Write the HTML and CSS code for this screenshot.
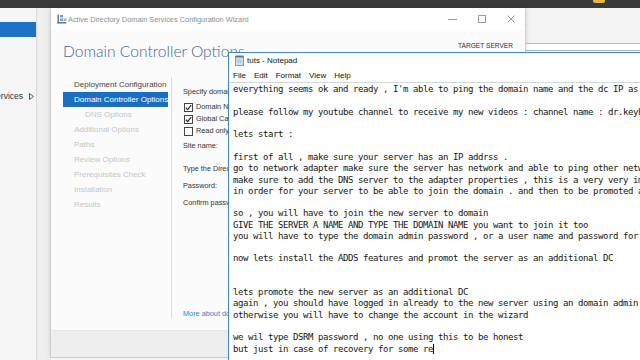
FILE: index.html
```html
<!DOCTYPE html>
<html lang="en">
<head>
<meta charset="utf-8">
<title>Domain Controller Options</title>
<link rel="stylesheet" href="styles.css">
</head>
<body>
<div class="screen">
  <div class="taskbar"><span class="tray-icon"></span></div>
  <div class="desktop">
    <aside class="sm-nav">
      <div class="sm-selected"></div>
      <div class="sm-row">
        <span class="sm-label"><span>File and Storage Services</span></span>
        <svg class="sm-arrow" width="5" height="7" viewBox="0 0 5 7"><polygon points="0.5,0.5 4.5,3.5 0.5,6.5" fill="none" stroke="#555" stroke-width="1"/></svg>
      </div>
    </aside>
    <main class="sm-main">
      <div class="sm-head"></div>
      <div class="sm-sub"></div>
      <div class="sm-content"></div>
    </main>

    <section class="wizard">
      <div class="wz-titlebar">
        <svg class="wz-icon" width="10" height="10" viewBox="0 0 10 10">
          <rect x="0.5" y="0.5" width="1.5" height="9" fill="#5d7a99"/>
          <rect x="0.5" y="8" width="9" height="1.5" fill="#5d7a99"/>
          <rect x="3" y="1" width="3" height="2.5" fill="#7f9fc0"/>
          <rect x="3" y="4.5" width="3" height="2.5" fill="#7f9fc0"/>
          <rect x="6.5" y="4.5" width="3" height="2.5" fill="#9bb5cf"/>
        </svg>
        <span class="wz-title">Active Directory Domain Services Configuration Wizard</span>
        <div class="wz-controls">
          <span class="wz-btn"><svg width="10" height="10" viewBox="0 0 10 10"><line x1="0" y1="5.5" x2="9" y2="5.5" stroke="#9a9a9a" stroke-width="1"/></svg></span>
          <span class="wz-btn"><svg width="10" height="10" viewBox="0 0 10 10"><rect x="1.5" y="1.5" width="7" height="7" fill="none" stroke="#9a9a9a" stroke-width="1"/></svg></span>
          <span class="wz-btn"><svg width="10" height="10" viewBox="0 0 10 10"><path d="M1.5 1.5 L8.5 8.5 M8.5 1.5 L1.5 8.5" stroke="#9a9a9a" stroke-width="1"/></svg></span>
        </div>
      </div>
      <div class="wz-header">
        <h1 class="wz-heading">Domain Controller Options</h1>
        <div class="wz-target">TARGET SERVER</div>
      </div>
      <div class="wz-body">
        <nav class="wz-steps">
          <div class="step done">Deployment Configuration</div>
          <div class="step active">Domain Controller Options</div>
          <div class="step sub">DNS Options</div>
          <div class="step">Additional Options</div>
          <div class="step">Paths</div>
          <div class="step">Review Options</div>
          <div class="step">Prerequisites Check</div>
          <div class="step">Installation</div>
          <div class="step">Results</div>
        </nav>
        <div class="wz-content">
          <div class="c-intro">Specify domain controller capabilities and site information</div>
          <div class="checks">
            <div class="check-row"><span class="cb"><svg width="7" height="7" viewBox="0 0 7 7"><polyline points="0.8,3.6 2.7,5.6 6.2,1.2" fill="none" stroke="#222" stroke-width="1.2"/></svg></span>Domain Name System (DNS) server</div>
            <div class="check-row"><span class="cb"><svg width="7" height="7" viewBox="0 0 7 7"><polyline points="0.8,3.6 2.7,5.6 6.2,1.2" fill="none" stroke="#222" stroke-width="1.2"/></svg></span>Global Catalog (GC)</div>
            <div class="check-row"><span class="cb"></span>Read only domain controller (RODC)</div>
          </div>
          <div class="c-site">Site name:</div>
          <div class="c-dsrm">Type the Directory Services Restore Mode (DSRM) password</div>
          <div class="c-pass">Password:</div>
          <div class="c-confirm">Confirm password:</div>
          <div class="c-more">More about domain controller options</div>
        </div>
      </div>
      <div class="wz-footer"></div>
    </section>

    <section class="notepad">
      <div class="np-title">
        <svg class="np-icon" width="9" height="11" viewBox="0 0 9 11">
          <rect x="0.5" y="1.5" width="8" height="9" fill="#cfe0ef" stroke="#7f98b3" stroke-width="1"/>
          <rect x="0.5" y="0.5" width="8" height="2" fill="#5b7694"/>
          <line x1="2" y1="5" x2="7" y2="5" stroke="#9fb6cc" stroke-width="0.8"/>
          <line x1="2" y1="7" x2="7" y2="7" stroke="#9fb6cc" stroke-width="0.8"/>
        </svg>
        <span class="np-name">tuts - Notepad</span>
      </div>
      <div class="np-menu">
        <span class="np-menu-item">File</span>
        <span class="np-menu-item">Edit</span>
        <span class="np-menu-item">Format</span>
        <span class="np-menu-item">View</span>
        <span class="np-menu-item">Help</span>
      </div>
<pre class="np-text">everything seems ok and ready , I'm able to ping the domain name and the dc IP as well

please follow my youtube channel to receive my new videos : channel name : dr.keyhan

lets start :

first of all , make sure your server has an IP addrss .
go to network adapter make sure the server has network and able to ping other network devices
make sure to add the DNS server to the adapter properties , this is a very very important step
in order for your server to be able to join the domain . and then to be promoted as a DC

so , you will have to join the new server to domain
GIVE THE SERVER A NAME AND TYPE THE DOMAIN NAME you want to join it too
you will have to type the domain admin password , or a user name and password for a domain admin

now lets install the ADDS features and promot the server as an additional DC


lets promote the new server as an additional DC
again , you should have logged in already to the new server using an domain admin account
otherwise you will have to change the account in the wizard

we wil type DSRM password , no one using this to be honest
but just in case of recovery for some re<span class="caret"></span></pre>
    </section>
  </div>
</div>
</body>
</html>
```
FILE: styles.css
```css
* { box-sizing: border-box; }
html, body { margin: 0; padding: 0; }
body {
  width: 640px;
  height: 360px;
  overflow: hidden;
  background: #f4f4f4;
  font-family: "Liberation Sans", Arial, sans-serif;
  color: #333;
}
.screen {
  width: 640px;
  height: 360px;
  display: flex;
  flex-direction: column;
  overflow: hidden;
}
.taskbar {
  height: 8px;
  flex: none;
  background: #3a3a3a;
  position: relative;
}
.tray-icon {
  position: absolute;
  left: 593px;
  top: 0;
  width: 12px;
  height: 3px;
  background: #e5b93c;
  border-radius: 0 0 2px 2px;
}
.desktop {
  flex: 1;
  display: flex;
  position: relative;
}

/* server manager behind */
.sm-nav {
  width: 37px;
  flex: none;
  background: #f6f6f6;
  border-right: 1px solid #d9d9d9;
  padding-top: 14px;
}
.sm-selected {
  height: 15px;
  background: #1b72c6;
}
.sm-row {
  margin-top: 52px;
  height: 14px;
  display: flex;
  align-items: center;
}
.sm-label {
  width: 23px;
  overflow: hidden;
  display: flex;
  justify-content: flex-end;
  white-space: nowrap;
  font-size: 8.5px;
  color: #333;
}
.sm-arrow { margin-left: 6px; flex: none; }
.sm-main {
  flex: 1;
  display: flex;
  flex-direction: column;
  background: #efefef;
  padding-left: 14px;
}
.sm-head {
  height: 36px;
  background: #f3f3f3;
  border-bottom: 1px solid #b9c3cd;
}
.sm-sub {
  height: 7px;
  background: #fff;
  border-bottom: 1px solid #a9b9c8;
}
.sm-content { flex: 1; background: #fff; }

/* wizard window */
.wizard {
  position: absolute;
  left: 50px;
  top: 0;
  width: 476px;
  height: 350px;
  background: #fbfbfb;
  border: 1px solid #cdcdcd;
  border-top: none;
  display: flex;
  flex-direction: column;
  box-shadow: 0 0 6px rgba(0, 0, 0, 0.12);
}
.wz-titlebar {
  height: 22px;
  flex: none;
  display: flex;
  align-items: center;
  padding-left: 6px;
  background: #fff;
}
.wz-icon { flex: none; margin-right: 1px; }
.wz-title {
  font-size: 7.4px;
  color: #8d8d8d;
  white-space: nowrap;
}
.wz-controls { margin-left: auto; display: flex; }
.wz-btn {
  width: 29px;
  height: 22px;
  display: flex;
  align-items: center;
  justify-content: center;
}
.wz-header {
  height: 47px;
  flex: none;
  display: flex;
  justify-content: space-between;
  align-items: flex-start;
  padding: 0 12px;
}
.wz-heading {
  margin: 12px 0 0;
  font-family: Lato, "Open Sans", sans-serif;
  font-weight: 300;
  font-size: 15.6px;
  line-height: 18px;
  color: #40688e;
  white-space: nowrap;
}
.wz-target {
  margin-top: 11px;
  font-size: 6.6px;
  line-height: 10px;
  color: #333;
  white-space: nowrap;
}
.wz-body {
  flex: 1;
  display: flex;
  align-items: flex-start;
}
.wz-steps {
  margin-left: 12px;
  width: 109px;
  height: 241px;
  flex: none;
  border-right: 1px solid #dcdcdc;
  font-size: 8px;
}
.step {
  height: 15px;
  line-height: 15px;
  padding-left: 11px;
  margin-right: 3px;
  color: #c6c6c6;
  white-space: nowrap;
  overflow: hidden;
}
.step.done { color: #454545; }
.step.active { background: #1b6fc3; color: #fff; }
.step.sub { padding-left: 22px; }
.wz-content {
  flex: 1;
  height: 253px;
  min-width: 0;
  padding-left: 11px;
  display: flex;
  flex-direction: column;
  font-size: 7.3px;
  line-height: 12px;
  color: #333;
  white-space: nowrap;
  overflow: hidden;
}
.c-intro { margin-top: 8.5px; }
.checks { margin-top: 3.5px; }
.check-row {
  height: 12px;
  display: flex;
  align-items: center;
}
.cb {
  width: 9px;
  height: 9px;
  margin: 0 3px 0 1px;
  border: 1px solid #444;
  background: #fff;
  display: inline-flex;
  align-items: center;
  justify-content: center;
  flex: none;
}
.c-site { margin-top: 3px; }
.c-dsrm { margin-top: 11px; }
.c-pass { margin-top: 5px; }
.c-confirm { margin-top: 5px; }
.c-more { margin-top: auto; margin-bottom: 10px; color: #3d7fc1; }
.wz-footer {
  height: 27px;
  flex: none;
  background: #eeeeee;
  border-top: 1px solid #e4e4e4;
}

/* notepad window */
.notepad {
  position: absolute;
  left: 228px;
  top: 44px;
  width: 430px;
  height: 330px;
  background: #fff;
  border: 1px solid #3d86d6;
  display: flex;
  flex-direction: column;
}
.np-title {
  height: 15px;
  flex: none;
  display: flex;
  align-items: center;
  padding-left: 6px;
  font-size: 8px;
  color: #111;
}
.np-icon { flex: none; margin-right: 3px; }
.np-name { white-space: nowrap; }
.np-menu {
  height: 15px;
  flex: none;
  display: flex;
  align-items: center;
  font-size: 8px;
  color: #111;
  border-bottom: 1px solid #cdd8e3;
}
.np-menu-item { padding: 0 4px; }
.np-text {
  margin: 0;
  padding: 1.4px 0 0 4px;
  font-family: "DejaVu Sans Mono", monospace;
  font-size: 9px;
  letter-spacing: -0.42px;
  line-height: 11.26px;
  color: #151515;
  white-space: pre;
  overflow: hidden;
}
.caret {
  display: inline-block;
  width: 1px;
  height: 10px;
  background: #000;
  vertical-align: -2px;
}
```
